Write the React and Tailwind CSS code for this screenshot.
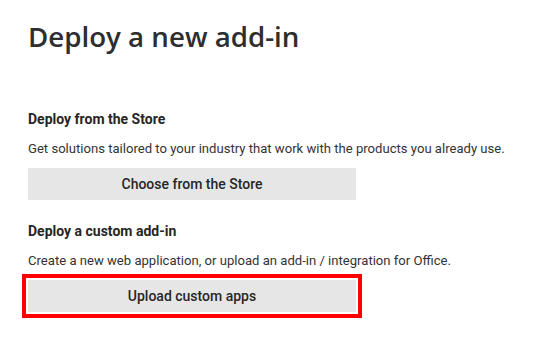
export default function App() {
  const body = { fontFamily: "Roboto, 'Liberation Sans', sans-serif" };
  return (
    <div className="min-h-[354px] w-full bg-white pl-[28px] pt-[18px] text-[#333333]">
      <h1
        className="text-[27.7px] font-semibold leading-[36px] text-[#2e2e2e]"
        style={{ fontFamily: "'Open Sans', sans-serif" }}
      >
        Deploy a new add-in
      </h1>

      <div style={body}>
        <h2 className="mt-[55px] text-[14px] font-bold leading-[20px] text-[#262626]">
          Deploy from the Store
        </h2>
        <p className="mt-[10px] text-[13.1px] leading-[20px] text-[#333333]">
          Get solutions tailored to your industry that work with the products you already use.
        </p>
        <button className="mt-[9px] flex h-[32px] w-[328px] items-center justify-center bg-[#e6e6e6] text-[14px] font-medium text-[#262626]">
          Choose from the Store
        </button>

        <h2 className="mt-[21px] text-[14px] font-bold leading-[20px] text-[#262626]">
          Deploy a custom add-in
        </h2>
        <p className="mt-[10px] text-[13.1px] leading-[20px] text-[#333333]">
          Create a new web application, or upload an add-in / integration for Office.
        </p>
        <button className="mt-[9px] flex h-[32px] w-[328px] items-center justify-center bg-[#e6e6e6] text-[14px] font-medium text-[#262626] outline-[4px] outline-solid outline-[#ff0000] outline-offset-[2px]">
          Upload custom apps
        </button>
      </div>
    </div>
  );
}
